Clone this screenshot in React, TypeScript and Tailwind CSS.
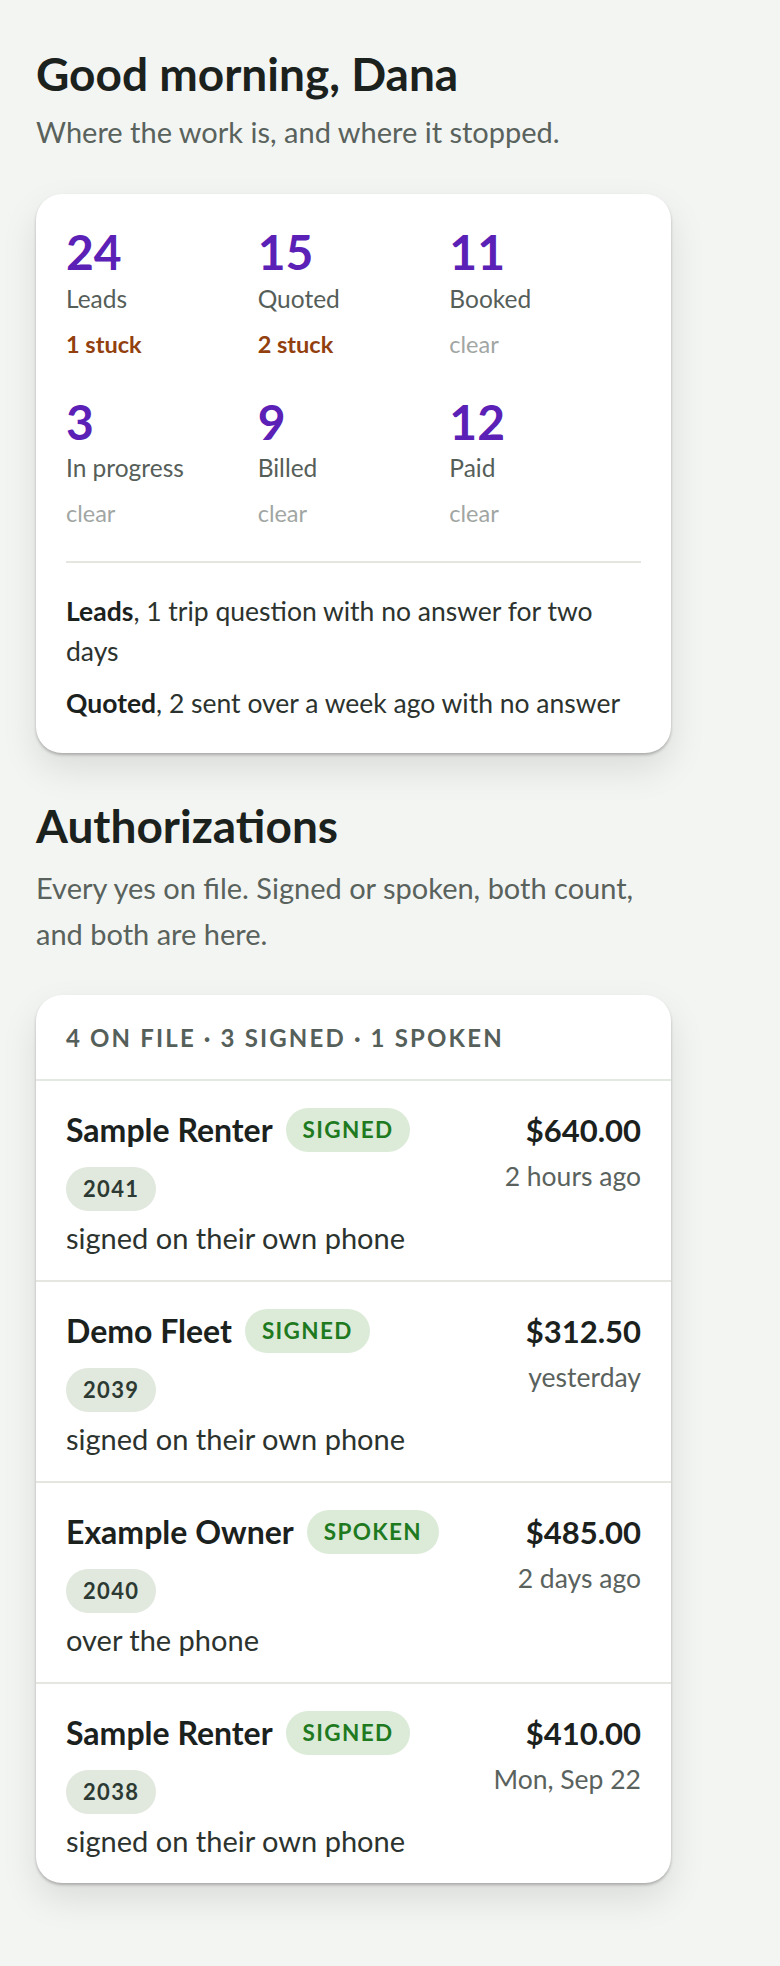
const stats = [
  { value: '24', label: 'Leads', note: '1 stuck', stuck: true },
  { value: '15', label: 'Quoted', note: '2 stuck', stuck: true },
  { value: '11', label: 'Booked', note: 'clear', stuck: false },
  { value: '3', label: 'In progress', note: 'clear', stuck: false },
  { value: '9', label: 'Billed', note: 'clear', stuck: false },
  { value: '12', label: 'Paid', note: 'clear', stuck: false },
];

const authorizations = [
  { name: 'Sample Renter', kind: 'SIGNED', id: '2041', amount: '$640.00', when: '2 hours ago', how: 'signed on their own phone' },
  { name: 'Demo Fleet', kind: 'SIGNED', id: '2039', amount: '$312.50', when: 'yesterday', how: 'signed on their own phone' },
  { name: 'Example Owner', kind: 'SPOKEN', id: '2040', amount: '$485.00', when: '2 days ago', how: 'over the phone' },
  { name: 'Sample Renter', kind: 'SIGNED', id: '2038', amount: '$410.00', when: 'Mon, Sep 22', how: 'signed on their own phone' },
];

const card =
  'rounded-[26px] bg-white shadow-[0_2px_3px_rgba(0,0,0,0.24),0_16px_36px_rgba(0,0,0,0.1)]';

export default function App() {
  return (
    <div className="min-h-screen bg-[#f3f5f2] px-[36px] pt-[46px] pb-[83px] font-['Lato','Noto_Sans',sans-serif] text-[#1b211d]">
      <div className="w-[635px]">
        <h1 className="text-[46px] font-bold leading-[1.2]">Good morning, Dana</h1>
        <p className="mt-[8px] text-[29px] leading-[46px] text-[#59625c]">Where the work is, and where it stopped.</p>

        <section className={`${card} mt-[39px] px-[30px] pt-[29px] pb-[30px]`}>
          <div className="grid grid-cols-3 gap-y-[33px]">
            {stats.map((s) => (
              <div key={s.label} className="flex flex-col">
                <span className="text-[48px] font-bold leading-[1.2] text-[#5b21b6]">{s.value}</span>
                <span className="mt-[2px] text-[24.5px] leading-[32px] text-[#565e59]">{s.label}</span>
                <span
                  className={
                    s.stuck
                      ? 'mt-[13px] text-[23.5px] font-bold leading-[32px] text-[#92400e]'
                      : 'mt-[13px] text-[23.5px] leading-[32px] text-[#a1a6a3]'
                  }
                >
                  {s.note}
                </span>
              </div>
            ))}
          </div>
          <div className="mt-[32px] border-t-2 border-[#e4e6df] pt-[28px] text-[26.5px] leading-[40px] text-[#2c332e]">
            <p>
              <b className="font-bold text-[#1b211d]">Leads</b>, 1 trip question with no answer for two days
            </p>
            <p className="mt-[12px]">
              <b className="font-bold text-[#1b211d]">Quoted</b>, 2 sent over a week ago with no answer
            </p>
          </div>
        </section>

        <h2 className="mt-[45px] text-[46px] font-bold leading-[1.2]">Authorizations</h2>
        <p className="mt-[11px] text-[29px] leading-[46px] text-[#59625c]">
          Every yes on file. Signed or spoken, both count, and both are here.
        </p>

        <section className={`${card} mt-[38px] overflow-hidden`}>
          <div className="border-b-2 border-[#e4e8e3] px-[30px] pt-[28px] pb-[26px] text-[24px] font-bold leading-[30px] tracking-[0.09em] text-[#56605a]">
            4 ON FILE · 3 SIGNED · 1 SPOKEN
          </div>
          {authorizations.map((a, i) => (
            <div
              key={a.id}
              className={`flex justify-between gap-4 px-[30px] pt-[27px] pb-[22px] ${
                i < authorizations.length - 1 ? 'border-b-2 border-[#e4e6df]' : ''
              }`}
            >
              <div className="flex flex-col items-start">
                <div className="flex h-[44px] items-center gap-[13px]">
                  <span className="text-[32px] font-bold leading-[44px]">{a.name}</span>
                  <span className="flex h-[44px] items-center rounded-full bg-[#dcebd8] px-[17px] text-[22.5px] font-bold tracking-[0.06em] text-[#1f7a1f]">
                    {a.kind}
                  </span>
                </div>
                <span className="mt-[15px] flex h-[44px] items-center rounded-full bg-[#e1e8de] px-[17px] text-[22px] font-bold tracking-[0.06em] text-[#2d3a33]">
                  {a.id}
                </span>
                <span className="mt-[7px] text-[29px] leading-[40px] text-[#2c332e]">{a.how}</span>
              </div>
              <div className="flex flex-col items-end">
                <span className="text-[31px] font-bold leading-[44px]">{a.amount}</span>
                <span className="mt-[6px] text-[26.5px] leading-[36px] text-[#5a625d]">{a.when}</span>
              </div>
            </div>
          ))}
        </section>
      </div>
    </div>
  );
}
